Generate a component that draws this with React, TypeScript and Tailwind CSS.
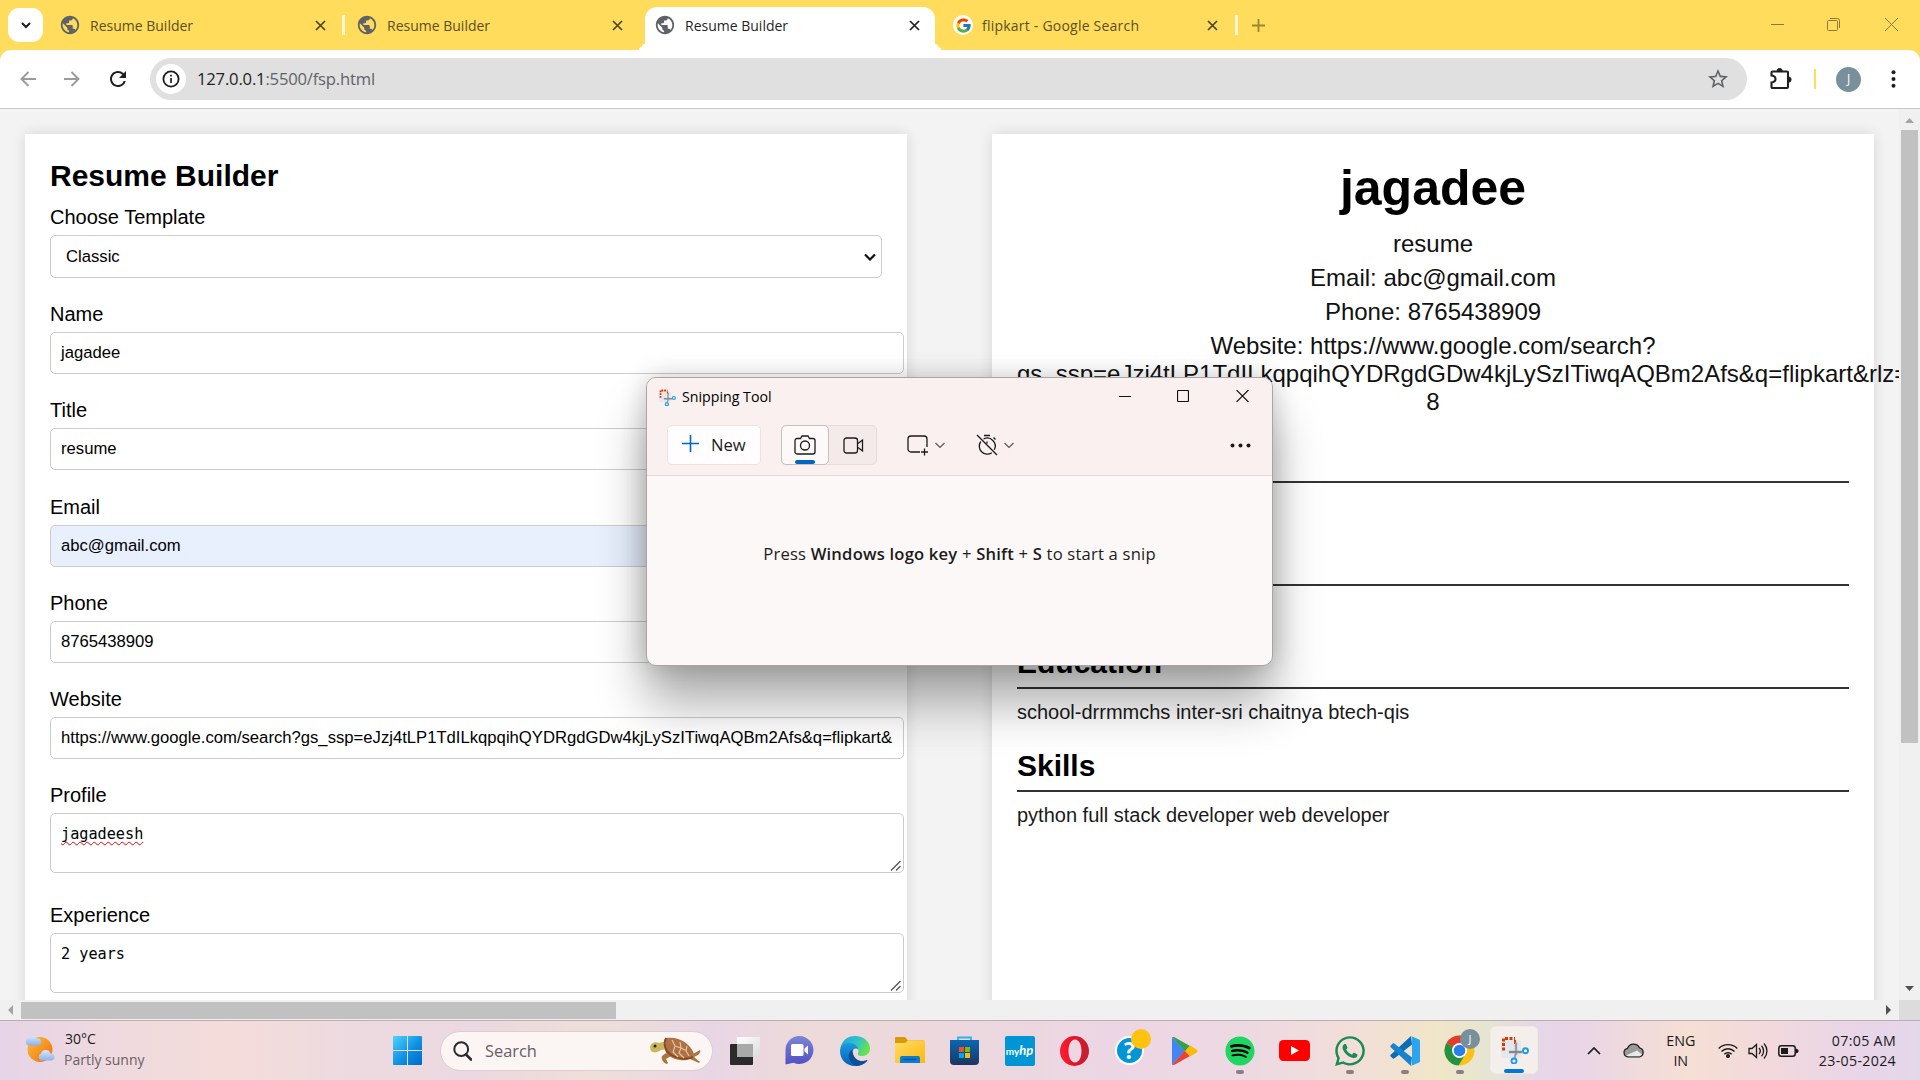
import React from "react";
import { FaSpotify, FaWhatsapp } from "react-icons/fa";
import { FcGoogle } from "react-icons/fc";
import { MdPublic, MdStarBorder, MdRefresh } from "react-icons/md";

const UI = "font-['Open_Sans','Noto_Sans',sans-serif]";
const URL_QUERY = "gs_ssp=eJzj4tLP1TdILkqpqihQYDRgdGDw4kjLySzITiwqAQBm2Afs&q=flipkart&";

function Cross({ s = 9, w = 1.9, c = "#4b4424" }: { s?: number; w?: number; c?: string }) {
  return (
    <svg width={s} height={s} viewBox="0 0 10 10" className="shrink-0 overflow-visible">
      <path d="M0 0L10 10M10 0L0 10" stroke={c} strokeWidth={w} />
    </svg>
  );
}

function TabTitle({ children, dark }: { children: React.ReactNode; dark?: boolean }) {
  return (
    <span className={`ml-[9px] flex-1 pt-px text-[14px] leading-5 whitespace-nowrap ${dark ? "text-[#1f1f1f]" : "text-[#5a5026]"}`}>
      {children}
    </span>
  );
}

function TabStrip() {
  return (
    <div className="flex h-[50px] bg-[#ffdc5c]">
      <div className="mt-2 ml-2 flex h-[34px] w-[35px] items-center justify-center rounded-[11px] bg-white">
        <svg width="10" height="7" viewBox="0 0 10 7"><path d="M1 1l4 4 4-4" fill="none" stroke="#1f1f1f" strokeWidth="2" /></svg>
      </div>
      <div className="ml-[16px] flex h-[50px] w-[266px] items-center">
        <MdPublic size={22} color="#5f6368" />
        <TabTitle>Resume Builder</TabTitle>
        <Cross />
      </div>
      <div className="mt-[15px] ml-[17px] h-5 w-[3px] bg-[#fff6d8]" />
      <div className="ml-[11px] flex h-[50px] w-[266px] items-center">
        <MdPublic size={22} color="#5f6368" />
        <TabTitle>Resume Builder</TabTitle>
        <Cross />
      </div>
      <div className="ml-[11px] flex items-end">
        <div className="h-3 w-3 rounded-br-xl shadow-[6px_6px_0_0_#fff] [clip-path:inset(0)]" />
        <div className="flex h-[43px] w-[290px] items-center rounded-t-[12px] bg-white pr-[16px] pb-[7px] pl-[9px]">
          <MdPublic size={22} color="#5f6368" />
          <TabTitle dark>Resume Builder</TabTitle>
          <Cross c="#1f1f1f" />
        </div>
        <div className="h-3 w-3 rounded-bl-xl shadow-[-6px_6px_0_0_#fff] [clip-path:inset(0)]" />
      </div>
      <div className="ml-[6px] flex h-[50px] w-[264px] items-center">
        <span className="flex h-[20px] w-[20px] items-center justify-center rounded-full bg-white"><FcGoogle size={17} /></span>
        <TabTitle><span className="tracking-[0.22px]">flipkart - Google Search</span></TabTitle>
        <Cross />
      </div>
      <div className="mt-[15px] ml-[18px] h-5 w-[3px] bg-[#fff6d8]" />
      <div className="ml-[14px] flex items-center">
        <svg width="13" height="13" viewBox="0 0 13 13"><path d="M6.5 0v13M0 6.5h13" stroke="#9a8636" strokeWidth="1.8" /></svg>
      </div>
      <div className="mr-[22px] ml-auto flex items-center pb-px">
        <svg width="13" height="13" viewBox="0 0 13 13"><path d="M0 6.5h13" stroke="#8b7a3d" /></svg>
        <svg className="ml-[43px]" width="13" height="13" viewBox="0 0 13 13" fill="none" stroke="#8b7a3d">
          <rect x=".5" y="2.5" width="10" height="10" rx="1" /><path d="M3 .5h7.5a2 2 0 0 1 2 2V10" />
        </svg>
        <svg className="ml-[45px]" width="13" height="13" viewBox="0 0 13 13"><path d="M0 0l13 13M13 0L0 13" stroke="#8b7a3d" /></svg>
      </div>
    </div>
  );
}

function Arrow({ flip }: { flip?: boolean }) {
  return (
    <svg width="16" height="16" viewBox="0 0 16 16" className={flip ? "rotate-180" : ""}>
      <path d="M16 8H2M8.500 1L1.500 8l7 7" fill="none" stroke="#9b9b9b" strokeWidth="1.9" />
    </svg>
  );
}

function Toolbar() {
  return (
    <div className="bg-[#ffdc5c]">
      <div className="flex h-[59px] items-center rounded-t-[11px] border-b border-[#c9c9c9] bg-white pl-[20px]">
        <Arrow />
        <span className="ml-[28px] flex"><Arrow flip /></span>
        <MdRefresh size={24} color="#1f1f1f" className="ml-[26px]" />
        <div className="ml-[20px] flex h-[42px] w-[1597px] items-center rounded-full bg-[#e0e0e0] pr-[17px] pl-[6px]">
          <div className="flex h-[30px] w-[30px] items-center justify-center rounded-full bg-white">
            <svg width="18" height="18" viewBox="0 0 18 18"><circle cx="9" cy="9" r="7.600" fill="none" stroke="#1f1f1f" strokeWidth="1.800" /><path d="M9 8v5M9 4.800v1.800" stroke="#1f1f1f" strokeWidth="1.700" /></svg>
          </div>
          <div className="ml-[11px] flex-1 pt-px text-[16.6px] tracking-[-0.18px] text-[#5f6368]"><span className="text-[#1f1f1f]">127.0.0.1</span>:5500/fsp.html</div>
          <MdStarBorder size={24} color="#5f6368" />
        </div>
        <svg className="ml-[23px]" width="22" height="22" viewBox="0 0 22 22">
          <path d="M2.500 3.500h14.500a1 1 0 0 1 1 1v14.500a1 1 0 0 1-1 1H2.500a1 1 0 0 1-1-1v-4.500c2.800-.4 4-1.600 4-3.500s-1.200-3.100-4-3.500V4.500a1 1 0 0 1 1-1z" fill="none" stroke="#1f1f1f" strokeWidth="2.100" />
          <path d="M7 3a2.600 2.600 0 0 1 5.200 0zM18.500 9a2.600 2.600 0 0 1 0 5.200z" fill="#1f1f1f" stroke="#1f1f1f" />
        </svg>
        <div className="ml-[22px] h-5 w-[2px] bg-[#ffdc5c]" />
        <div className="ml-[20px] flex h-[25px] w-[25px] items-center justify-center rounded-full bg-[#78909c] text-[12px] text-white">J</div>
        <svg className="ml-[30px]" width="5" height="18" viewBox="0 0 5 18" fill="#1f1f1f"><circle cx="2.500" cy="2.200" r="2" /><circle cx="2.500" cy="9" r="2" /><circle cx="2.500" cy="15.800" r="2" /></svg>
      </div>
    </div>
  );
}

function Grip() {
  return (
    <svg className="absolute right-[2px] bottom-px" width="11" height="11" viewBox="0 0 11 11"><path d="M1 10.500L10.500 1M6 10.500L10.500 6" stroke="#555" strokeWidth="1.300" /></svg>
  );
}

function Field({ label, value, autofill }: { label: string; value: string; autofill?: boolean }) {
  return (
    <div className="h-[96.2px]">
      <div className="text-[20px] leading-[23px]">{label}</div>
      <div className={`mt-[6px] h-[42px] w-[854px] rounded-[5px] border border-[#ccc] px-[10px] text-[16.67px] leading-[39px] whitespace-nowrap ${autofill ? "bg-[#e8f0fe]" : "bg-white"}`}>
        {value}
      </div>
    </div>
  );
}

function Area({ label, value, wavy }: { label: string; value: string; wavy?: boolean }) {
  return (
    <div className="h-[120px]">
      <div className="text-[20px] leading-[23px]">{label}</div>
      <div className="relative mt-[6px] h-[60px] w-[854px] rounded-[5px] border border-[#ccc] bg-white px-[10px] pt-[10px] font-['DejaVu_Sans_Mono',monospace] text-[15.2px] leading-[20px]">
        <span className={wavy ? "underline decoration-red-600 decoration-wavy decoration-1 underline-offset-[2px] [text-decoration-skip-ink:none]" : ""}>{value}</span>
        <Grip />
      </div>
    </div>
  );
}

function Section({ title, body }: { title: string; body: string }) {
  return (
    <div className="h-[102.75px]">
      <h2 className="h-[42.75px] border-b-2 border-[#333] text-[30px] leading-[34.5px] font-bold">{title}</h2>
      <p className="mt-[12.5px] text-[20px] leading-[23px] text-[#1a1a1a]">{body}</p>
    </div>
  );
}

function ResumePage() {
  return (
    <div className="flex h-[891px] w-[1899px] items-start overflow-hidden bg-[#f3f3f3] pt-[25px] pl-[25px] font-['Liberation_Sans',Arial,sans-serif] text-black">
      <div className="h-[1100px] w-[882px] shrink-0 bg-white p-[25px] shadow-[0_0_13px_rgba(0,0,0,0.12)]">
        <h2 className="text-[30px] leading-[34px] font-bold">Resume Builder</h2>
        <div className="mt-[13px] h-[97.300px]">
          <div className="text-[20px] leading-[23px]">Choose Template</div>
          <div className="mt-[6px] flex h-[43px] w-[832px] items-center justify-between rounded-[5px] border border-[#ccc] pr-[5px] pl-[15px] text-[16.67px]">
            <span className="-mt-px">Classic</span>
            <svg width="12" height="8" viewBox="0 0 12 8"><path d="M1 1.500l5 5 5-5" fill="none" stroke="#111" strokeWidth="2.200" /></svg>
          </div>
        </div>
        <Field label="Name" value="jagadee" />
        <Field label="Title" value="resume" />
        <Field label="Email" value="abc@gmail.com" autofill />
        <Field label="Phone" value="8765438909" />
        <Field label="Website" value={`https://www.google.com/search?${URL_QUERY}`} />
        <Area label="Profile" value="jagadeesh" wavy />
        <Area label="Experience" value="2 years" />
      </div>
      <div className="ml-[85px] h-[1100px] w-[882px] shrink-0 bg-white p-[25px] shadow-[0_0_13px_rgba(0,0,0,0.12)]">
        <div className="mb-[24.700px] text-center text-[24px] leading-[28px] text-[#111]">
          <h1 className="mb-[13px] pt-px text-[50px] leading-[57px] font-bold text-black">jagadee</h1>
          <p className="mb-[6px]">resume</p>
          <p className="mb-[6px]">Email: abc@gmail.com</p>
          <p className="mb-[6px]">Phone: 8765438909</p>
          <p>Website: https://www.google.com/search?<br /><span className="block text-left whitespace-nowrap">{`${URL_QUERY}rlz=`}</span>8</p>
        </div>
        <Section title="Profile" body="jagadeesh" />
        <Section title="Experience" body="2 years" />
        <Section title="Education" body="school-drrmmchs inter-sri chaitnya btech-qis" />
        <Section title="Skills" body="python full stack developer web developer" />
      </div>
    </div>
  );
}

function VScroll() {
  return (
    <div className="flex w-[21px] flex-col items-center bg-[#f0f0f0]">
      <svg className="mt-[9px] shrink-0" width="9" height="5"><path d="M0 5L4.500 0L9 5z" fill="#a3a3a3" /></svg>
      <div className="mt-[7px] h-[613px] w-[17px] bg-[#c1c1c1]" />
      <svg className="mt-auto mb-[9px] shrink-0" width="9" height="5"><path d="M0 0L4.500 5L9 0z" fill="#505050" /></svg>
    </div>
  );
}

function HScroll() {
  return (
    <div className="flex h-[20px] items-center bg-[#f0f0f0]">
      <svg className="ml-[8px]" width="5" height="10"><path d="M5 0L0 5L5 10z" fill="#a3a3a3" /></svg>
      <div className="ml-[8px] h-[17px] w-[595px] bg-[#c1c1c1]" />
      <svg className="mr-[8px] ml-auto" width="5" height="10"><path d="M0 0L5 5L0 10z" fill="#505050" /></svg>
      <div className="h-[20px] w-[21px] bg-[#dcdcdc]" />
    </div>
  );
}

function SnipGlyph({ size }: { size: number }) {
  return (
    <svg width={size} height={size} viewBox="0 0 28 28" fill="none">
      <rect x="0" y="4" width="20" height="18" rx="3" fill="#dde6ee" opacity=".7" />
      <path d="M2.500 14.500V2.500h11.500" stroke="#d83b01" strokeWidth="3" strokeDasharray="3 1.500" />
      <path d="M14 4v4" stroke="#d83b01" strokeWidth="2" />
      <path d="M15 6.500v12.500" stroke="#9a9ea3" strokeWidth="2.400" />
      <path d="M8 16h13.500" stroke="#85898e" strokeWidth="2.400" />
      <path d="M15 17l-1.500 5" stroke="#9a9ea3" strokeWidth="2" />
      <circle cx="24.500" cy="14.800" r="2.500" stroke="#1b9be8" strokeWidth="1.900" />
      <circle cx="13" cy="25" r="2.500" stroke="#1b9be8" strokeWidth="1.900" />
    </svg>
  );
}

function Chevron() {
  return <svg width="10" height="7" viewBox="0 0 10 7"><path d="M.5 1l4.500 4.500L9.500 1" fill="none" stroke="#5d5858" strokeWidth="1.200" /></svg>;
}

function SnippingTool() {
  return (
    <div className={`absolute top-[377px] left-[646px] h-[289px] w-[627px] overflow-hidden rounded-[10px] border border-[#a9a5a5] bg-[#fcf8f7] text-[#1b1b1b] shadow-[0_38px_50px_rgba(0,0,0,0.32),0_0_26px_rgba(0,0,0,0.2)] ${UI}`}>
      <div className="flex h-[98px] flex-col border-b border-[#e3dcdb] bg-[#f9f0ef]">
        <div className="flex h-[38px] items-center pl-[12px]">
          <SnipGlyph size={17} />
          <span className="ml-[6px] flex-1 text-[14.2px] text-black">Snipping Tool</span>
          <svg className="-mt-[2px]" width="12" height="12"><path d="M0 6.500h12" stroke="#111" strokeWidth="1.200" /></svg>
          <svg className="-mt-[2px] ml-[46px]" width="12" height="12"><rect x=".5" y=".5" width="11" height="11" rx="1" fill="none" stroke="#111" strokeWidth="1.200" /></svg>
          <svg className="-mt-[2px] mr-[23px] ml-[47px]" width="13" height="12" viewBox="0 0 13 12"><path d="M.5 0l12 12M12.500 0L.5 12" stroke="#111" strokeWidth="1.100" /></svg>
        </div>
        <div className="mt-[9px] flex h-[40px] items-center">
          <div className="ml-[20px] flex h-[40px] w-[94px] items-center rounded-[5px] border border-[#ebe2e1] bg-[#fffdfd] pl-[14px]">
            <svg width="17" height="17" viewBox="0 0 17 17" className="-mt-[3px]"><path d="M8.500 0v17M0 8.500h17" stroke="#0067c0" strokeWidth="1.600" /></svg>
            <span className="ml-[12px] pt-px text-[16.6px]">New</span>
          </div>
          <div className="ml-[20px] flex h-[40px] w-[96px] items-center rounded-[5px] border border-[#e6dedd] bg-[#f3eae9]">
            <div className="-my-px -ml-px flex h-[40px] w-[48px] flex-col items-center rounded-[5px] border border-[#c5bfbf] bg-[#fdf9f9] pt-[9px]">
              <svg className="shrink-0" width="22" height="20" viewBox="0 0 22 20" fill="none" stroke="#1b1b1b" strokeWidth="1.300"><path d="M3 3.500h3.500L8 1h6l1.500 2.500H19a2 2 0 0 1 2 2V17a2 2 0 0 1-2 2H3a2 2 0 0 1-2-2V5.500a2 2 0 0 1 2-2z" /><circle cx="11" cy="10.500" r="4.500" /></svg>
              <div className="mt-[5px] h-[4px] w-[20px] shrink-0 rounded-full bg-[#0067c0]" />
            </div>
            <svg className="ml-[14px]" width="21" height="17" viewBox="0 0 21 17" fill="none" stroke="#1b1b1b" strokeWidth="1.300"><rect x="1" y="1" width="13.500" height="15" rx="2.500" /><path d="M15 6.500l4.500-3.500v11L15 10.500" /></svg>
          </div>
          <svg className="ml-[30px]" width="22" height="21" viewBox="0 0 22 21" fill="none" stroke="#1b1b1b" strokeWidth="1.300"><path d="M13 17H4a3 3 0 0 1-3-3V4a3 3 0 0 1 3-3h13a3 3 0 0 1 3 3v8M17.500 13.500v7M14 17h7" /></svg>
          <span className="ml-[6px] flex"><Chevron /></span>
          <svg className="ml-[31px]" width="22" height="22" viewBox="0 0 22 22" fill="none" stroke="#1b1b1b" strokeWidth="1.300"><path d="M1 1l20 20M8 1.500h6M17.500 3.500l2 2M7.500 5a8 8 0 0 1 10.800 10.800M15.800 18.800A8 8 0 0 1 4.800 7.500M11 7.500v2" /></svg>
          <span className="ml-[6px] flex"><Chevron /></span>
          <svg className="mr-[21px] ml-auto" width="21" height="5" fill="#1b1b1b"><circle cx="2.500" cy="2.500" r="2" /><circle cx="10.500" cy="2.500" r="2" /><circle cx="18.500" cy="2.500" r="2" /></svg>
        </div>
      </div>
      <div className="pt-[66px] text-center text-[16.600px] leading-[24px] tracking-[0.2px] whitespace-nowrap">
        Press <b className="font-semibold">Windows logo key</b> + <b className="font-semibold">Shift</b> + <b className="font-semibold">S</b> to start a snip
      </div>
    </div>
  );
}

function Turtle() {
  return (
    <svg width="54" height="30" viewBox="0 0 54 30">
      <path d="M17 17l-4 3c-1 3 1 7 5 8l1-1-2-4 5-3zM44 18l7-4c1 1 0 3-2 5l-4 2 6 5-1 1-9-4z" fill="#a8763c" />
      <path d="M1 11C2 7 6 5 10 7l8-2 2 8-8 1c-4 3-8 3-10 1z" fill="#c9b65e" />
      <path d="M17 2C30 0 42 8 45 18c-2 5-7 7-14 6-8-1-15-5-15-12z" fill="#ad7145" />
      <path d="M17 2c-3 6-1 13 5 17 7 4 16 5 22 2" fill="none" stroke="#86481f" strokeWidth="1.800" />
      <path d="M23 4l3 6-2 6 5 5M31 6l1 6-2 5 5 5M38 10l-1 5 3 5M26 10l6 2 6 3" fill="none" stroke="#e6c29a" strokeWidth="1.200" />
      <circle cx="6" cy="10" r="1.500" fill="#2b2a1c" />
    </svg>
  );
}

function Cell({ children, mark }: { children: React.ReactNode; mark?: boolean }) {
  return (
    <div className="relative flex h-[59px] w-[55px] shrink-0 items-center justify-center">
      {children}
      {mark && <span className="absolute bottom-[6px] left-[24px] h-[4px] w-[8px] rounded-full bg-[#8b7f83]" />}
    </div>
  );
}

function WinLogo({ size }: { size: number }) {
  return (
    <svg width={size} height={size} viewBox="0 0 29 29">
      <defs><linearGradient id="win" x1="0" y1="0" x2="29" y2="29" gradientUnits="userSpaceOnUse"><stop stopColor="#4fd3ff" /><stop offset=".55" stopColor="#0e90e2" /><stop offset="1" stopColor="#0069cc" /></linearGradient></defs>
      <path d="M0 1a1 1 0 0 1 1-1h13v14H0zM15 0h13a1 1 0 0 1 1 1v13H15zM0 15h14v14H1a1 1 0 0 1-1-1zM15 15h14v13a1 1 0 0 1-1 1H15z" fill="url(#win)" />
    </svg>
  );
}

function PinnedApps() {
  return (
    <div className="flex">
      <Cell>
        <svg width="30" height="28" viewBox="0 0 30 28"><defs><linearGradient id="tv" x1="0" y1="0" x2="1" y2="1"><stop stopColor="#fff" /><stop offset="1" stopColor="#dcdcdc" /></linearGradient></defs><rect y="7" width="23" height="21" rx="1" fill="#2a2a2a" /><rect x="7" width="23" height="20" rx="1" fill="url(#tv)" /><rect x="7" y="7" width="16" height="13" fill="#a9a9a9" /></svg>
      </Cell>
      <Cell>
        <svg width="29" height="29" viewBox="0 0 29 29"><defs><linearGradient id="ch" x1="0" y1="0" x2="0" y2="1"><stop stopColor="#7a86d6" /><stop offset="1" stopColor="#5350c4" /></linearGradient></defs><path d="M14.500 0a14 14 0 1 1-6 26.700L.500 28.500V14A14 14 0 0 1 14.500 0z" fill="url(#ch)" /><rect x="6" y="8" width="12.500" height="12" rx="1.500" fill="#fff" /><path d="M19.500 12.500l3.500-3v9l-3.500-3z" fill="#fff" /></svg>
      </Cell>
      <Cell>
        <svg width="30" height="30" viewBox="0 0 30 30">
          <defs>
            <linearGradient id="eg" x1="0" y1="0" x2="1" y2=".4"><stop stopColor="#1ba5dd" /><stop offset=".6" stopColor="#2fc4c9" /><stop offset="1" stopColor="#66e34d" /></linearGradient>
            <linearGradient id="eb" x1="0" y1="0" x2="0" y2="1"><stop stopColor="#1c9bde" /><stop offset="1" stopColor="#0560b8" /></linearGradient>
          </defs>
          <path d="M.3 12.500C2 4 8 0 15 0c9 0 15 6 15 12.500 0 5-4 7.500-8 7.500-3 0-5-1-4-3 2-3-1-7-5-7C7 10 2 9 .3 12.500z" fill="url(#eg)" />
          <path d="M0 15C0 9 5 6.500 10 7c5 .5 8 3.500 8.500 6.500C16 11 12 13 12 17c0 6 6 9 11 8 2-.3 3.500-1 4.500-1C25 28 20 30 15 30 6.500 30 0 23.500 0 15z" fill="url(#eb)" />
          <path d="M12.500 13.500C6 17 8 27 16.500 29.800 21 29.500 25 28 27.700 24c-5 2.500-15 1.500-15.200-10.500z" fill="#0d4f98" />
        </svg>
      </Cell>
      <Cell>
        <svg width="30" height="27" viewBox="0 0 30 27"><defs><linearGradient id="fo" x1="0" y1="0" x2="1" y2="1"><stop stopColor="#ffdc62" /><stop offset="1" stopColor="#fcb911" /></linearGradient></defs><path d="M0 1a1 1 0 0 1 1-1h9l3 3.500h16V8H0z" fill="#d99a07" /><path d="M0 6h10l3-2.500h16a1 1 0 0 1 1 1V26H0z" fill="url(#fo)" /><path d="M5 26v-5a2 2 0 0 1 2-2h16a2 2 0 0 1 2 2v5z" fill="#0a7cd2" /><path d="M8.500 22.500h13" stroke="#0b4f8f" strokeWidth="1.300" /></svg>
      </Cell>
      <Cell>
        <svg width="29" height="29" viewBox="0 0 29 29"><defs><linearGradient id="st" x1="0" y1="0" x2="0" y2="1"><stop stopColor="#0b66b5" /><stop offset="1" stopColor="#1b3660" /></linearGradient></defs><path d="M8 5V1.500h13V5" fill="none" stroke="#29b4f2" strokeWidth="1.800" /><path d="M0 4h29v21a4 4 0 0 1-4 4H4a4 4 0 0 1-4-4z" fill="url(#st)" /><path d="M9 11h5v5H9z" fill="#f25022" /><path d="M15 11h5v5h-5z" fill="#7fba00" /><path d="M9 17h5v5H9z" fill="#00a4ef" /><path d="M15 17h5v5h-5z" fill="#ffb900" /></svg>
      </Cell>
      <Cell>
        <div className="flex h-[30px] w-[30px] items-center justify-center rounded-[2px] bg-[#0096d6] font-['Lato',sans-serif] text-[10px] leading-none font-bold text-white">
          my<span className="text-[13px] italic">hp</span>
        </div>
      </Cell>
      <Cell>
        <svg width="29" height="30" viewBox="0 0 29 30"><defs><linearGradient id="op" x1="0" y1="0" x2="1" y2="0"><stop stopColor="#ff1b2d" /><stop offset=".5" stopColor="#e3142a" /><stop offset="1" stopColor="#c0212f" /></linearGradient></defs><path fillRule="evenodd" d="M14.500 0a14.500 15 0 1 0 0 30a14.500 15 0 1 0 0-30zM15 3.500c4 0 6.500 5 6.500 11.500S19 26.500 15 26.500 8.500 21.500 8.500 15 11 3.500 15 3.500z" fill="url(#op)" /></svg>
      </Cell>
      <Cell>
        <div className="relative flex h-[29px] w-[29px] items-center justify-center rounded-full border-2 border-white bg-[#0096d6] font-['Open_Sans',sans-serif] text-[23px] leading-none font-bold text-white">?
          <span className="absolute -top-[9px] left-[14px] h-[20px] w-[20px] rounded-full bg-[#ffc20e]" />
        </div>
      </Cell>
      <Cell>
        <svg width="27" height="28" viewBox="0 0 27 28"><path d="M1 0v28L14 14z" fill="#4285f4" /><path d="M1 0c1-.3 2 0 3 .5L19 9l-5 5.500z" fill="#34a04c" /><path d="M1 28c1 .3 2 0 3-.5L19 19l-5-5.500z" fill="#ea4335" /><path d="M19 8.500l6.500 4c1.500 1 1.500 2 0 3l-6.500 4-5-5.500z" fill="#fbbc04" /></svg>
      </Cell>
      <Cell mark>
        <span className="flex h-[27px] w-[27px] items-center justify-center rounded-full bg-black"><FaSpotify size={30} color="#1ed760" className="shrink-0" /></span>
      </Cell>
      <Cell>
        <svg width="31" height="21" viewBox="0 0 31 21"><rect width="31" height="21" rx="4.500" fill="#f00" /><path d="M12 6l8 4.500-8 4.500z" fill="#fff" /></svg>
      </Cell>
      <Cell mark>
        <FaWhatsapp size={34} color="#1c8a55" />
      </Cell>
      <Cell mark>
        <svg width="31" height="30" viewBox="0 0 31 30"><path d="M22 0L2 18.500c-1 .8-1 1.500 0 2.300l1.500 1.400c.7.600 1.300.600 2 0L23 8.500z" fill="#0a6db8" /><path d="M22 30L2 11.500c-1-.8-1-1.500 0-2.300l1.500-1.400c.7-.600 1.300-.600 2 0L23 21.500z" fill="#1583cd" /><path d="M22 0l8 3.500c.700.300 1 .7 1 1.500v20c0 .8-.3 1.200-1 1.500L22 30c1-.5 1-1 1-2V2c0-1 0-1.500-1-2z" fill="#2aa5ee" /></svg>
      </Cell>
      <Cell mark>
        <div className="relative">
          <svg width="31" height="31" viewBox="0 0 31 31"><circle cx="15.500" cy="15.500" r="15" fill="#fbc116" /><path d="M15.500 15.500L2.500 8A15 15 0 0 1 28.500 8z" fill="#e33b2e" /><path d="M2.500 8A15 15 0 0 0 14.500 30.500L21.500 19z" fill="#229342" /><circle cx="15.500" cy="15.500" r="7.500" fill="#fff" /><circle cx="15.500" cy="15.500" r="5.800" fill="#2b7de9" /></svg>
          <span className={`absolute -top-[6px] left-[16px] flex h-[20px] w-[20px] items-center justify-center rounded-full bg-[#78909c] text-[11px] text-white ${UI}`}>J</span>
        </div>
      </Cell>
      <div className="relative mt-[5px] ml-[3px] flex h-[48px] w-[48px] items-center justify-center rounded-[5px] border border-[#f1e9e6] bg-[#f5efec] pl-[2px]">
        <SnipGlyph size={28} />
        <span className="absolute bottom-0 left-[13px] h-[4px] w-[20px] rounded-full bg-[#0078d4]" />
      </div>
    </div>
  );
}

function Taskbar() {
  return (
    <div className={`flex h-[60px] border-t border-[#b9afb3] bg-[linear-gradient(90deg,#e6d4e8_0%,#eed9df_5%,#f4dcd9_12%,#eddae0_18%,#ecd8e0_25%,#efdfd9_31%,#e9d6e5_37%,#eddad9_42%,#ecd8de_50%,#ecd6e4_58%,#edd9e2_65%,#f2dfd8_71%,#f0e6c8_75%,#e6e5d3_77.5%,#e6d7e8_80%,#e9d5e7_82%,#f6dfd4_88%,#f2d9dc_92%,#e8d5e8_97%,#e3d8ea_100%)] text-[#1b1b1b] ${UI}`}>
      <div className="flex w-[393px] pl-[24px]">
        <svg className="mt-[13px]" width="32" height="30" viewBox="0 0 32 30"><defs><linearGradient id="sun" x1="0" y1="0" x2="1" y2="1"><stop stopColor="#fcc136" /><stop offset="1" stopColor="#ef6b12" /></linearGradient><linearGradient id="cl" x1="0" y1="0" x2="0" y2="1"><stop stopColor="#d9e8fb" /><stop offset="1" stopColor="#8eb0ea" /></linearGradient></defs><circle cx="16" cy="15.500" r="12.500" fill="url(#sun)" /><path d="M4 11.500a3.800 3.800 0 0 1 0-7 5 5 0 0 1 9 0 3.500 3.500 0 0 1 1 7z" fill="url(#cl)" /><path d="M17 26.500a3.800 3.800 0 0 1 0-7 5 5 0 0 1 9.500 0 3.500 3.500 0 0 1 1 7z" fill="url(#cl)" /></svg>
        <div className="mt-[8px] ml-[8px] text-[14px] leading-[20.500px]"><div className="pl-px">30°C</div><div className="text-[#6b6063]">Partly sunny</div></div>
      </div>
      <div className="mt-[15px] w-[47px]"><WinLogo size={29} /></div>
      <div className="mt-[10px] mr-[4px] flex h-[40px] w-[273px] items-center rounded-full border border-[#dccdd1] bg-[#fbf5f4] pl-[12px]">
        <svg width="19" height="20" viewBox="0 0 19 20"><circle cx="8.200" cy="8.200" r="6.900" fill="none" stroke="#2b2b2b" strokeWidth="2" /><path d="M13 13.500l5 5" stroke="#2b2b2b" strokeWidth="2.600" strokeLinecap="round" /></svg>
        <span className="ml-[13px] text-[16.400px] text-[#666062]">Search</span>
        <span className="mr-[9px] ml-auto"><Turtle /></span>
      </div>
      <PinnedApps />
      <div className="mr-[24px] ml-auto flex items-center">
        <svg width="14" height="8" viewBox="0 0 14 8"><path d="M1 7l6-6 6 6" fill="none" stroke="#1b1b1b" strokeWidth="1.700" /></svg>
        <svg className="ml-[22px]" width="21" height="15" viewBox="0 0 21 15"><path d="M5 13.800a4.300 4.300 0 0 1-.5-8.500 6.500 6.500 0 0 1 12-.5 4.600 4.600 0 0 1 0 9z" fill="#9a9a9a" stroke="#222" strokeWidth="1.300" /><path d="M3 12.500L14 7.500l5 4-2 1.800H5z" fill="#e9e9e9" /></svg>
        <div className="ml-[22px] w-[30px] text-center text-[14.300px] leading-[20px]"><div>ENG</div><div>IN</div></div>
        <svg className="ml-[22px]" width="20" height="15" viewBox="0 0 20 15" fill="none" stroke="#1b1b1b" strokeWidth="1.400"><path d="M.700 5.500a13 13 0 0 1 18.600 0M3.500 8.500a9 9 0 0 1 13 0M6.300 11.300a5.200 5.200 0 0 1 7.400 0" /><circle cx="10" cy="13" r="1.300" fill="#1b1b1b" /></svg>
        <svg className="ml-[10px]" width="21" height="18" viewBox="0 0 21 18" fill="none" stroke="#1b1b1b" strokeWidth="1.300"><path d="M1 6.500h3l4.500-4v13l-4.500-4H1z" /><path d="M11 6a4.500 4.500 0 0 1 0 6M13.500 3.800a7.500 7.500 0 0 1 0 10.400M16 1.500a11 11 0 0 1 0 15" /></svg>
        <svg className="ml-[9px]" width="21" height="12" viewBox="0 0 21 12"><rect x=".8" y=".8" width="16.400" height="10.400" rx="2.500" fill="none" stroke="#1b1b1b" strokeWidth="1.500" /><rect x="3" y="3" width="7" height="6" fill="#1b1b1b" /><path d="M18 4l2 1v2l-2 1z" fill="#1b1b1b" stroke="#1b1b1b" /></svg>
        <div className="ml-[20px] text-right text-[14.200px] leading-[20px] tracking-[0.32px] whitespace-nowrap"><div>07:05 AM</div><div>23-05-2024</div></div>
      </div>
    </div>
  );
}

export default function App() {
  return (
    <div className={`relative flex h-[1080px] w-[1920px] flex-col overflow-hidden bg-white ${UI}`}>
      <TabStrip />
      <Toolbar />
      <div className="flex h-[891px]">
        <ResumePage />
        <VScroll />
      </div>
      <HScroll />
      <Taskbar />
      <SnippingTool />
    </div>
  );
}
